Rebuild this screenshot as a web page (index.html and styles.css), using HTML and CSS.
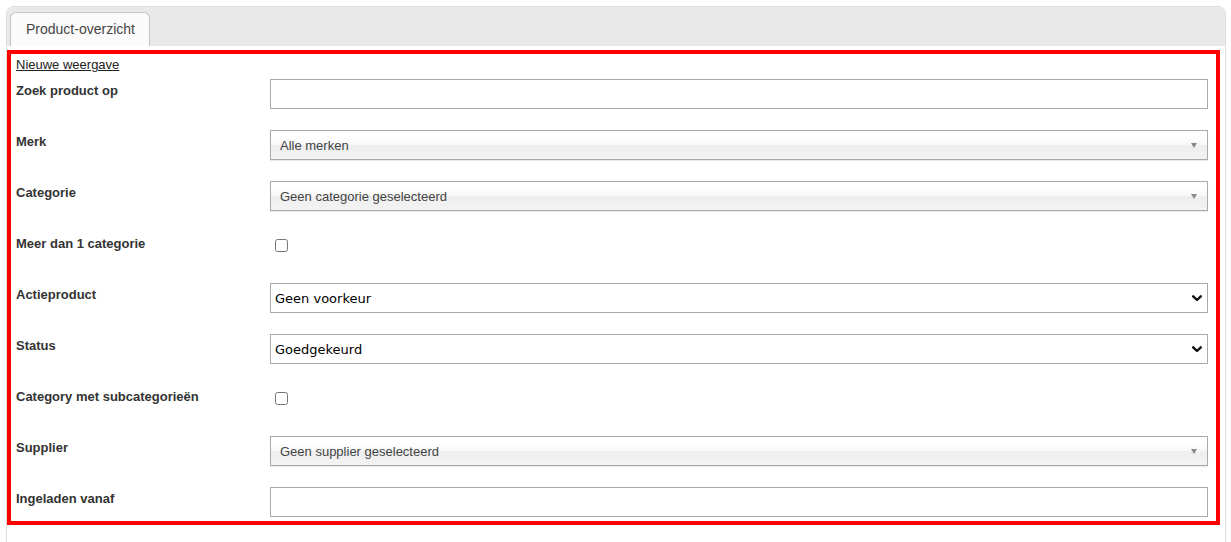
FILE: index.html
```html
<!DOCTYPE html>
<html lang="nl">
<head>
<meta charset="utf-8">
<title>Product-overzicht</title>
<link rel="stylesheet" href="styles.css">
</head>
<body>
<div class="page">
  <div class="panel">
    <div class="tabs">
      <div class="tab">Product-overzicht</div>
    </div>
    <div class="highlight">
      <a class="link" href="#">Nieuwe weergave</a>
      <div class="row">
        <label class="label">Zoek product op</label>
        <div class="ctl"><input class="text" type="text"></div>
      </div>
      <div class="row">
        <label class="label">Merk</label>
        <div class="ctl"><div class="chosen"><span class="chosen-text">Alle merken</span><b class="tri"></b></div></div>
      </div>
      <div class="row">
        <label class="label">Categorie</label>
        <div class="ctl"><div class="chosen"><span class="chosen-text">Geen categorie geselecteerd</span><b class="tri"></b></div></div>
      </div>
      <div class="row">
        <label class="label">Meer dan 1 categorie</label>
        <div class="ctl"><input class="check" type="checkbox"></div>
      </div>
      <div class="row">
        <label class="label">Actieproduct</label>
        <div class="ctl">
          <div class="sel-wrap">
            <select class="native"><option>Geen voorkeur</option></select>
            <svg class="chev" width="10" height="7" viewBox="0 0 10 7"><path d="M1.2 1.3 L5 5 L8.8 1.3" fill="none" stroke="#111" stroke-width="2.4" stroke-linecap="round" stroke-linejoin="round"/></svg>
          </div>
        </div>
      </div>
      <div class="row">
        <label class="label">Status</label>
        <div class="ctl">
          <div class="sel-wrap">
            <select class="native"><option>Goedgekeurd</option></select>
            <svg class="chev" width="10" height="7" viewBox="0 0 10 7"><path d="M1.2 1.3 L5 5 L8.8 1.3" fill="none" stroke="#111" stroke-width="2.4" stroke-linecap="round" stroke-linejoin="round"/></svg>
          </div>
        </div>
      </div>
      <div class="row">
        <label class="label">Category met subcategorieën</label>
        <div class="ctl"><input class="check" type="checkbox"></div>
      </div>
      <div class="row">
        <label class="label">Supplier</label>
        <div class="ctl"><div class="chosen"><span class="chosen-text">Geen supplier geselecteerd</span><b class="tri"></b></div></div>
      </div>
      <div class="row last">
        <label class="label">Ingeladen vanaf</label>
        <div class="ctl"><input class="text" type="text"></div>
      </div>
    </div>
  </div>
</div>
</body>
</html>
```

FILE: styles.css
```css
* { box-sizing: border-box; }
html, body { margin: 0; padding: 0; background: #fff; }
body { font-family: "Liberation Sans", Arial, sans-serif; color: #333; }

.page { padding: 6px 5px 0 6px; height: 542px; overflow: hidden; }

.panel {
  border: 1px solid #dddddd;
  border-bottom: none;
  border-radius: 8px 8px 0 0;
  height: 560px;
  background: #fff;
}

.tabs {
  height: 39px;
  background: #e9e9e9;
  border-radius: 7px 7px 0 0;
  padding: 5px 0 0 3px;
  display: flex;
  align-items: flex-end;
}

.tab {
  height: 34px;
  padding: 0 14px 0 15px;
  border: 1px solid #c5c5c5;
  border-bottom: none;
  border-radius: 6px 6px 0 0;
  background: #fbfbfb;
  font-size: 14px;
  line-height: 33px;
  color: #454545;
}

.highlight {
  margin: 4px 5px 0 0;
  border: 4px solid #ff0000;
  padding: 1px 8px 0 5px;
}

.link {
  display: block;
  width: max-content;
  font-size: 13px;
  line-height: 17px;
  padding-top: 1px;
  height: 17px;
  color: #222;
  text-decoration: underline;
}

.row {
  display: flex;
  align-items: flex-start;
  height: 51px;
}
.row.last { height: auto; padding-bottom: 4px; }

.label {
  width: 254px;
  flex: none;
  padding-top: 11px;
  font-size: 13px;
  line-height: 16px;
  font-weight: bold;
  color: #333;
}

.ctl { flex: 1; min-width: 0; }

.text {
  display: block;
  width: 100%;
  height: 30px;
  margin: 7px 0 0 0;
  border: 1px solid #aaa;
  border-radius: 0;
  background: #fff;
  outline: none;
}

.chosen {
  display: flex;
  align-items: center;
  height: 30px;
  margin-top: 7px;
  padding: 1px 10px 0 9px;
  border: 1px solid #aaa;
  background: linear-gradient(#ffffff 20%, #f8f8f8 48%, #eeeeee 52%, #f3f3f3 100%);
  box-shadow: 0 1px 1px rgba(0,0,0,0.08);
  font-size: 13px;
  color: #444;
}
.chosen-text { flex: 1; }
.tri {
  width: 0;
  height: 0;
  border-left: 3.5px solid transparent;
  border-right: 3.5px solid transparent;
  border-top: 5px solid #888;
}

.check {
  display: block;
  width: 13px;
  height: 13px;
  margin: 14px 0 0 5px;
}

.sel-wrap { position: relative; margin-top: 7px; }
.native {
  display: block;
  width: 100%;
  height: 30px;
  appearance: none;
  -webkit-appearance: none;
  border: 1px solid #aaa;
  border-radius: 0;
  background: #fff;
  padding: 1px 0 0 4px;
  font-family: "DejaVu Sans", Verdana, sans-serif;
  font-size: 13px;
  color: #000;
  outline: none;
}
.chev { position: absolute; right: 6px; top: 12px; pointer-events: none; }
```
